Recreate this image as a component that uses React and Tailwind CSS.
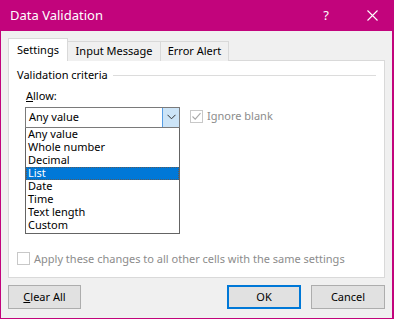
import React from 'react';

const items = ['Any value', 'Whole number', 'Decimal', 'List', 'Date', 'Time', 'Text length', 'Custom'];

const Check = ({ checked }) => (
  <span className="w-[13px] h-[13px] border border-[#c8c8c8] bg-white flex items-center justify-center">
    {checked && (
      <svg width="11" height="11" viewBox="0 0 11 11">
        <path d="M1.5 5.5 L4.2 8.2 L9.5 2.2" fill="none" stroke="#a8a8a8" strokeWidth="1.1" />
      </svg>
    )}
  </span>
);

const App = () => {
  return (
    <div
      className="w-[394px] h-[319px] bg-[#f0f0f0] border-l border-r-2 border-b border-[#c2047c] flex flex-col text-[11px] text-[#000] overflow-hidden"
      style={{ fontFamily: '"Noto Sans", "Open Sans", sans-serif' }}
    >
      {/* title bar */}
      <div className="h-[31px] bg-[#c2047c] text-white flex items-center pl-[9px] shrink-0">
        <span className="text-[13px]">Data Validation</span>
        <span className="ml-auto mr-[38px] text-[13px]">?</span>
        <svg className="mr-[14px]" width="11" height="11" viewBox="0 0 11 11">
          <path d="M0.5 0.5 L10.5 10.5 M10.5 0.5 L0.5 10.5" stroke="#fff" strokeWidth="1.1" />
        </svg>
      </div>

      <div className="flex flex-col px-[7px] pt-[7px]">
        {/* tabs */}
        <div className="flex items-end h-[23px] relative z-10">
          <div className="h-[23px] w-[60px] bg-white border border-[#d9d9d9] border-b-0 flex items-center justify-center">
            Settings
          </div>
          <div className="h-[20px] w-[93px] bg-[#f0f0f0] border border-[#d9d9d9] border-l-0 border-b-0 flex items-center justify-center">
            Input Message
          </div>
          <div className="h-[20px] w-[68px] bg-[#f0f0f0] border border-[#d9d9d9] border-l-0 border-b-0 flex items-center justify-center">
            Error Alert
          </div>
        </div>

        {/* panel */}
        <div className="h-[218px] -mt-px bg-white border border-[#d9d9d9] flex flex-col px-[8px] pt-[6px] pb-[10px]">
          <div className="flex items-center">
            <span>Validation criteria</span>
            <div className="flex-1 h-px bg-[#dcdcdc] ml-[5px]" />
          </div>

          <div className="flex pl-[8px] mt-[3px]">
            <div className="flex flex-col w-[155px]">
              <span className="h-[17px] leading-[17px] pl-[1px]">
                <span className="underline">A</span>llow:
              </span>
              <div className="h-[21px] border border-[#7a7a7a] flex items-stretch bg-white mt-[3px]">
                <span className="flex-1 pl-[3px] leading-[17px]">Any value</span>
                <div className="w-[17px] bg-[#cce4f7] border-l border-[#569de5] flex items-center justify-center">
                  <svg width="9" height="6" viewBox="0 0 9 6">
                    <path d="M0.5 0.8 L4.5 4.8 L8.5 0.8" fill="none" stroke="#333" strokeWidth="1" />
                  </svg>
                </div>
              </div>
              <div className="border border-t-0 border-[#646464] bg-white flex flex-col pb-[1px]">
                {items.map((it) => (
                  <div
                    key={it}
                    className={
                      it === 'List'
                        ? 'h-[13px] leading-[12px] pl-[2px] bg-[#0078d7] text-white outline outline-1 outline-dotted outline-[#5a5a5a] -outline-offset-1'
                        : 'h-[13px] leading-[12px] pl-[2px]'
                    }
                  >
                    {it}
                  </div>
                ))}
              </div>
            </div>
            <div className="flex items-center gap-[4px] ml-[10px] mt-[22px] h-[15px] text-[#8c8c8c]">
              <Check checked />
              <span>Ignore blank</span>
            </div>
          </div>

          <div className="mt-auto flex items-center gap-[4px] text-[#8c8c8c]">
            <Check />
            <span>Apply these changes to all other cells with the same settings</span>
          </div>
        </div>

        {/* buttons */}
        <div className="flex mt-[7px]">
          <button className="w-[73px] h-[24px] bg-[#e1e1e1] border border-[#adadad]">
            <span className="underline">C</span>lear All
          </button>
          <button className="ml-auto w-[74px] h-[24px] bg-[#e1e1e1] border-2 border-[#0078d7]">OK</button>
          <button className="ml-[10px] w-[74px] h-[24px] bg-[#e1e1e1] border border-[#adadad]">Cancel</button>
        </div>
      </div>
    </div>
  );
};

export default App;
